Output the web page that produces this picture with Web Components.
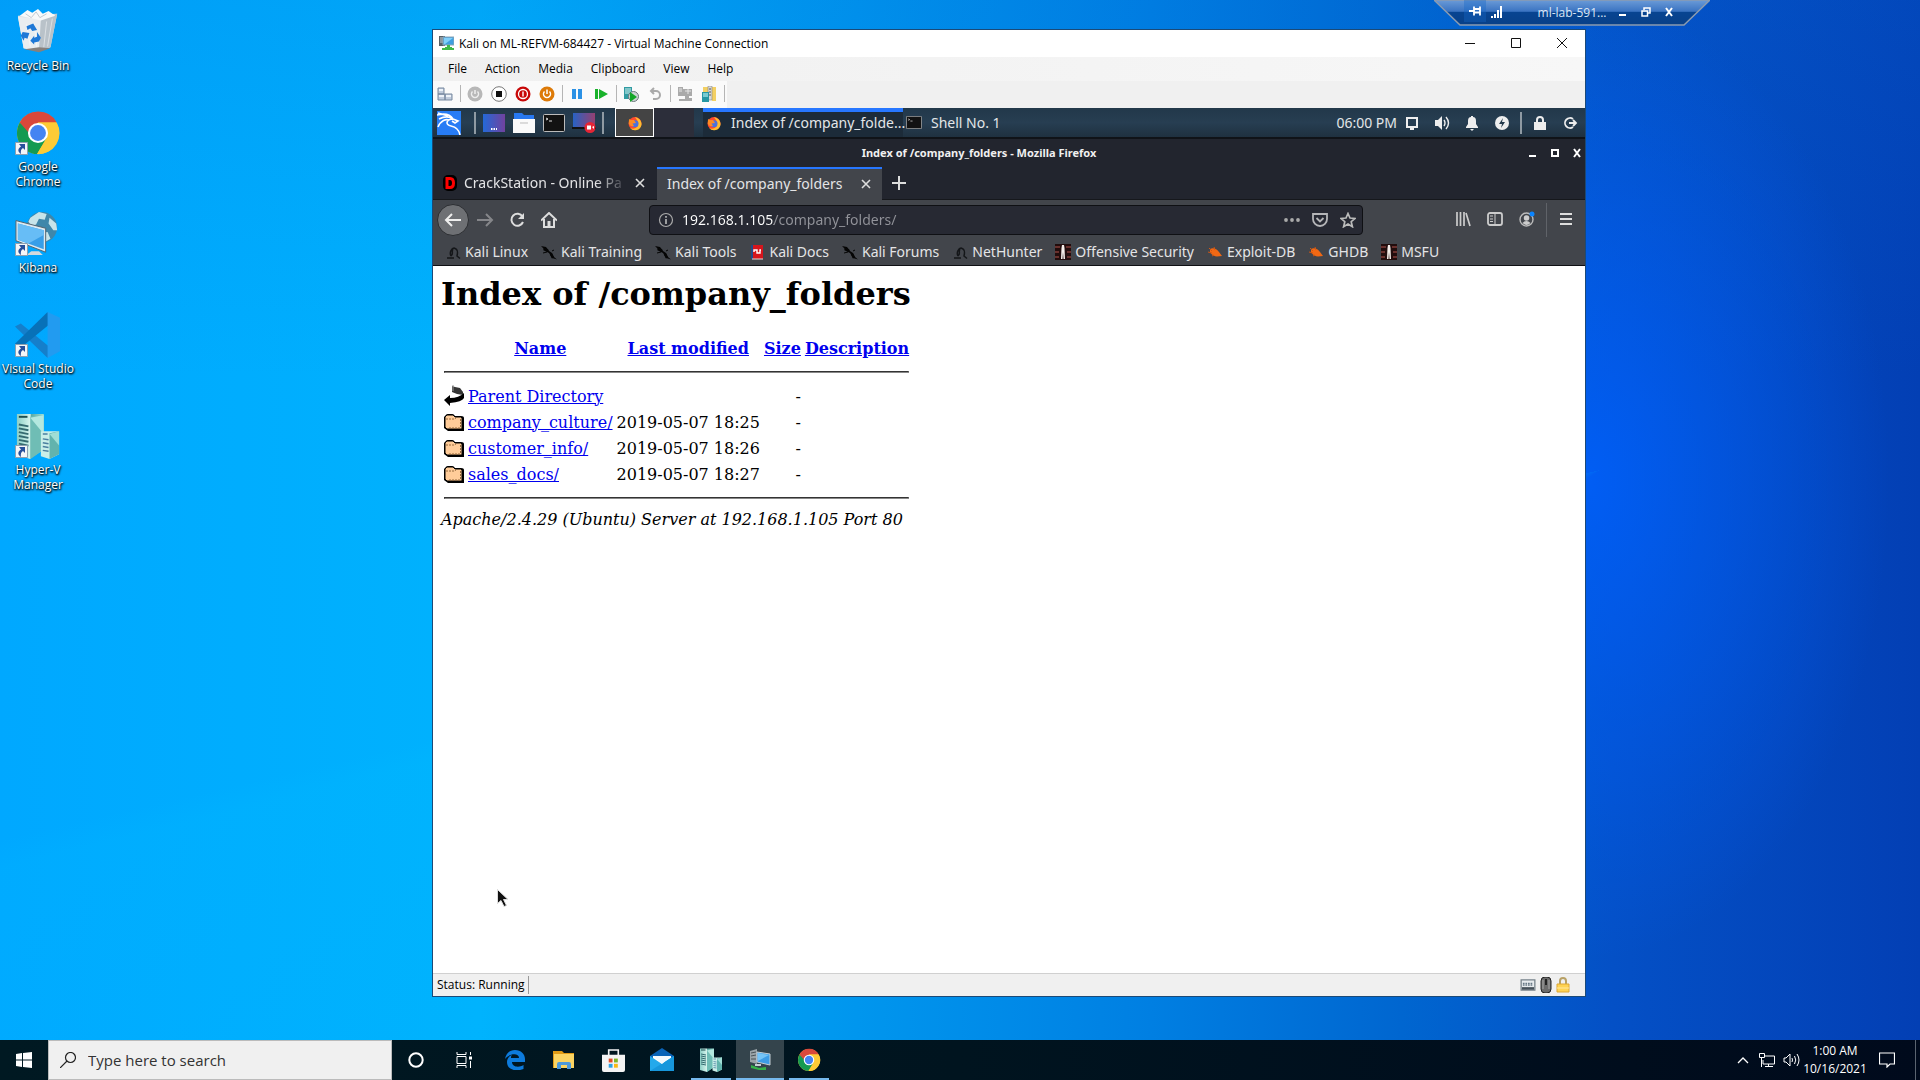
<!DOCTYPE html>
<html lang="en">
<head>
<meta charset="utf-8">
<title>Remote desktop</title>
<style>
html,body{margin:0;height:100%;overflow:hidden}
body{font-family:"Open Sans","Noto Sans",sans-serif;font-size:12px;color:#000}
</style>
</head>
<body>
<lab-desktop></lab-desktop>
<script>
const CHROME = '<circle cx="24" cy="24" r="22" fill="#fbc832"/><path d="M24 13H43.5A22 22 0 0 0 5 13L14.500 29Z" fill="#d9483b"/><path d="M5 13A22 22 0 0 0 23 46L33 29L24 24H14.500Z" fill="#159a51"/><path d="M24 13H43.500A22 22 0 0 1 23 46L33.500 29Z" fill="#fdcb36"/><circle cx="24" cy="24" r="10.500" fill="#fff"/><circle cx="24" cy="24" r="8.300" fill="#4484f2"/>';
const HYPERV = '<defs><linearGradient id="h1" x2="1"><stop offset="0" stop-color="#8ccfc6"/><stop offset=".5" stop-color="#d8f5ee"/><stop offset=".52" stop-color="#58a8a3"/><stop offset="1" stop-color="#9fe0d5"/></linearGradient></defs><path d="M2 1H30V38L16 48L2 44Z" fill="url(#h1)"/><path d="M16 4L30 2V38L16 48Z" fill="#6fbdb5"/><path d="M16 5L30 22V2Z" fill="#b3e8df"/><path d="M4 4h9" stroke="#1d4e50" stroke-width="2"/><path d="M4 12l10 2M4 16l10 2M4 20l10 2M4 24l10 2M4 28l10 2M4 32l10 2" stroke="#356b70" stroke-width="2"/><path d="M27 19H46V43L36 48L27 45Z" fill="#c9eee8"/><path d="M36 21L46 19V43L36 48Z" fill="#62b3ad"/><path d="M36 22L46 34V19Z" fill="#a0ded5"/><path d="M29 22h5M29 27l6 1M29 31l6 1M29 35l6 1M29 39l6 1" stroke="#4b7fa0" stroke-width="1.500"/>';
const FIREFOX = '<circle cx="8" cy="8.500" r="6.500" fill="#ff4a2e"/><path d="M8 2C12 3 15 6 14.500 10A6.600 6.600 0 0 1 3 13C8 15 12 12 11 7C10.500 5 9 4 8 2Z" fill="#ffbd2f"/><circle cx="8" cy="8.800" r="3.500" fill="#4a72dd"/><path d="M2 4C3 5 5 5 7 5L9 8L5.500 8.500L7 11C4 12 2 10 1.800 8Z" fill="#ff8a22"/>';
const MONITOR = '<path d="M1 1h6v10H1z" fill="#555f66"/><path d="M2 3h3M2 5h3M2 7h3" stroke="#c6d1d8"/><path d="M5 2h11v8H5z" fill="#3f9fe0" stroke="#8da6b5"/><path d="M6 3h9L7 9H6z" fill="#7fd0fa"/><path d="M9 10h3v2h2v3h-7v-3h2z" fill="#41b94a"/><path d="M4 14h12" stroke="#41b94a" stroke-width="2"/>';
const DRAGON = '<path d="M0 2L5 3L8 7L11 9L13 13L16 15.500L11 14L8 9L4 7L2 6L3 5Z" fill="#050505"/><path d="M3 4l4 3M10 10l2 4" stroke="#050505" stroke-width="2.500" fill="none"/><path d="M2 9l4-1M11 7l2-1" stroke="#050505"/>';
const HOOK = '<path d="M6 12C4 8 7 4 9 4C13 5 13 8 12 12L15 14.500M2 14H9M8 5C6 8 9 9 6 12" fill="none" stroke="#141619" stroke-width="1.500"/>';
const OFFSEC = '<path d="M0 0h16v16H0z" fill="#220d0d"/><path d="M0 3h5M11 3h5M0 8h4M12 8h4M0 13h4M12 13h4" stroke="#69302d" stroke-width="2"/><path d="M7 1h2l.500 3 .500 11H8.500L8 8l-.500 7H6L6.500 4z" fill="#f5efeb"/>';
const BUG = '<path d="M3 5C6 3 10 5 12 8L15 12L10 12.500C6 12 4 10 3 8Z" fill="#f16814"/><path d="M2 4l3 3M1 8l4 1M5 12l2-1M7 3l1 3" stroke="#d25611"/>';
const TERM = '<rect x=".500" y=".500" width="21" height="17" rx="1" fill="#121212" stroke="#bbb"/><path d="M3 4l2 1-2 1M6 7h3" fill="none" stroke="#ddd"/>';
const ICONS = {
 null:['0 0 1 1',''],
 recycle:['0 0 48 48','<path d="M3 7L44 5L37 40L25 44L9 41Z" fill="#dce2e7"/><path d="M3 8L27 11L25 44L9 41Z" fill="#e9edf0"/><path d="M27 11L44 5L37 40L25 44Z" fill="#b9c2c9"/><path d="M5 7L13 1L18 4L24 0L29 5L35 2L42 7L27 12Z" fill="#f7f9fa"/><path d="M11 5l6 4 5-6 4 6 7-4" fill="none" stroke="#bfc8cf"/><path d="M12 16l4 23M20 15l3 27M33 13l-3 27M39 10l-5 29" stroke="#fff" opacity=".5"/><path d="M10 42l15 3 12-4-12-1z" fill="#86817d"/><path d="M12 18l7-3 4 7-5 1-2-3-3 2zM8 24l7 1-2 6-3-1-1 3-3-5zM23 24l4 6-2 4-5 1v2l-4-4 4-5v2l3-1z" fill="#1e78d6"/>'],
 chrome:['0 0 48 48',CHROME],
 kibana:['0 0 48 48','<circle cx="28" cy="17" r="16" fill="#3f87aa"/><path d="M16 7L25 1L33 3L31 9L25 8L22 14L17 16L14 11ZM36 7L43 13L44 20L40 20L35 13ZM26 23L34 22L37 29L30 33Z" fill="#c7e4ea"/><path d="M1 10L32 18V43L1 31Z" fill="#dceaf2"/><path d="M3 13L30 20V40L3 30Z" fill="#379ee8"/><path d="M3 13L30 20V25L14 34L3 30Z" fill="#67bdf6"/><path d="M12 46h17l-4-4h-8z" fill="#d3d9dd"/><path d="M1 10L32 18V43L1 31Z" fill="none" stroke="#53606a"/>'],
 code:['0 0 48 48','<path d="M0 15L6 12L38 38L34 48Z" fill="#157fcb"/><path d="M0 33L34 0L37 12L5 38Z" fill="#0871b8"/><path d="M34 0L47 6V41L34 48Z" fill="#229bf0"/>'],
 hyperv:['0 0 48 48',HYPERV],
 shortcut:['0 0 13 13','<path d="M.500.500h12v12H.500z" fill="#f4f6f8" stroke="#8da0b0"/><path d="M4 2h6v6L8 6C6 7 5.500 9 6 12C3 10 2 7 6 4.500z" fill="#28509b"/>'],
 monitor:['0 0 16 16',MONITOR],
 tbmonitor:['0 0 22 22','<path d="M1 2l7-2v15l-7-2z" fill="#9aa3a8"/><path d="M2 4l5-1M2 7l5-1M2 10h5" stroke="#4a5357"/><path d="M8 3l13 2v11L8 13z" fill="#3d9de6" stroke="#c4ced4"/><path d="M9 4l11 2-11 6z" fill="#74c4f7"/><path d="M6 15h6v2H6z" fill="#c4ced4"/><path d="M2 16l8 3 7-1v3H10l-8-2z" fill="#35b24a"/>'],
 cad:['0 0 16 16','<path d="M1 2h6v6H1zM1 8h7v6H1zM8 8h7v6H8z" fill="#c0cbdc" stroke="#77889f"/><path d="M2 3h4v2H2zM2 9h5v2H2zM9 9h5v2H9z" fill="#edf2f8"/>'],
 poweroff:['0 0 16 16','<circle cx="8" cy="8" r="7.500" fill="#b8b8b8"/><path d="M8 4v4M5.500 5.500a3.500 3.500 0 1 0 5 0" fill="none" stroke="#eee" stroke-width="1.500"/>'],
 stop:['0 0 16 16','<circle cx="8" cy="8" r="7.300" fill="#fff" stroke="#777"/><path d="M5 5h6v6H5z" fill="#111"/>'],
 shut:['0 0 16 16','<circle cx="8" cy="8" r="7.500" fill="#c80808"/><circle cx="8" cy="8" r="4.500" fill="none" stroke="#fff" stroke-width="1.300"/><path d="M8 5.500v5" stroke="#fff" stroke-width="1.400"/>'],
 save:['0 0 16 16','<circle cx="8" cy="8" r="7.500" fill="#dd7a08"/><path d="M8 3.500v4.500M5.500 5.500a3.500 3.500 0 1 0 5 0" fill="none" stroke="#fff" stroke-width="1.500"/>'],
 pause:['0 0 16 16','<path d="M3 3h4v10H3zM9 3h4v10H9z" fill="#2b91e5"/>'],
 play:['0 0 16 16','<path d="M2 3h3v10H2zM6 3l9 5-9 5z" fill="#19b22b"/>'],
 check:['0 0 16 16','<path d="M1 1h8v12H1z" fill="#319ba2"/><path d="M2 3h6M2 5h6M2 7h6" stroke="#d4f2f0"/><circle cx="10.500" cy="10.500" r="5" fill="#ccd4d5" stroke="#697779"/><path d="M7 6l7 5-7 5z" fill="#13a628"/>'],
 revert:['0 0 16 16','<path d="M4 5h5a4 4 0 0 1 0 8H6M7 2L4 5l3 3" fill="none" stroke="#aaa" stroke-width="2"/>'],
 graymon:['0 0 16 16','<path d="M1 1h5v9H1zM6 3h9v7H6zM8 10h4v2h3v3H2v-2h6z" fill="#aaa"/><path d="M2 3h3M2 5h3M11 3v5M8 5h6" stroke="#e5e5e5"/>'],
 enh:['0 0 16 16','<path d="M2 1h5v14H2zM11 1h4v14h-4z" fill="#f3d064"/><path d="M7 0h4v14H7z" fill="#d9d9d9" stroke="#777" stroke-width=".500"/><path d="M8 3h2M8 6h2M8 9h2" stroke="#555"/><path d="M1 6h7v10H1z" fill="#2597a3"/><path d="M2 8h5M2 10h5" stroke="#cff"/>'],
 kali:['0 0 24 24','<path d="M0 0h24v24H0z" fill="#277cf5"/><path d="M0 4C8 2 13 3 16 8C9 8 8 14 14 15C19 16 22 18 23 24M2 8C8 5 12 5 16 8L21 10L18 12L15 10M1 16C4 9 9 8 12 9M1 2L11 5" fill="none" stroke="#fff" stroke-width="1.600"/>'],
 desk:['0 0 22 18','<defs><linearGradient id="d1" x2="1"><stop stop-color="#2469d8"/><stop offset="1" stop-color="#71429e"/></linearGradient></defs><path d="M0 0h22v18H0z" fill="url(#d1)"/><path d="M8 15h6" stroke="#fff" stroke-width="2" stroke-dasharray="1.500 1"/>'],
 folder:['0 0 22 20','<path d="M1 0h8l2 2h10v5H1z" fill="#2878f0"/><path d="M0 6h22v14H0z" fill="#fafafa"/><path d="M7 10h8" stroke="#bbb"/>'],
 term:['0 0 22 18',TERM],
 rec:['0 0 24 20','<defs><linearGradient id="r1" x2="1"><stop stop-color="#2862c4"/><stop offset="1" stop-color="#954071"/></linearGradient></defs><path d="M1 0h22v14H1z" fill="url(#r1)"/><path d="M0 15h24" stroke="#111" stroke-width="2"/><circle cx="18" cy="14.500" r="5.500" fill="#e62535"/><path d="M15 12.500h4v4h-4zM20 14l2-1v3z" fill="#fff"/>'],
 firefox:['0 0 16 16',FIREFOX],
 screen:['0 0 16 16','<path d="M3 3h10v9H3z" fill="none" stroke="#eee" stroke-width="2"/><path d="M6 14h4" stroke="#eee" stroke-width="2"/>'],
 sound:['0 0 16 16','<path d="M1 5h3l4-4v14L4 11H1z" fill="#eee"/><path d="M10 5q2 3 0 6M12 2q5 6 0 12" fill="none" stroke="#eee" stroke-width="1.400"/>'],
 bell:['0 0 16 16','<path d="M2 12l2-3V6q0-4 3-4V1h2v1q3 0 3 4v3l2 3v1H2zM6 14h4l-2 2z" fill="#eee"/>'],
 bolt:['0 0 16 16','<circle cx="8" cy="8" r="7" fill="#eee"/><path d="M9 3L5 9h3l-1 4 4-6H8z" fill="#24394b"/>'],
 lock:['0 0 16 16','<path d="M2 7h12v8H2z" fill="#eee"/><path d="M5 8V5q0-3 3-3t3 3v3" fill="none" stroke="#eee" stroke-width="2"/>'],
 exit:['0 0 16 16','<path d="M11 4a5 5 0 1 0 0 8M7 8h7M11 5l3 3-3 3" fill="none" stroke="#eee" stroke-width="1.800"/>'],
 min:['0 0 10 10','<path d="M1 8h7" stroke="#fff" stroke-width="2"/>'],
 max:['0 0 10 10','<path d="M2 2h6v6H2z" fill="none" stroke="#fff" stroke-width="2"/>'],
 cls:['0 0 10 10','<path d="M2 1l6 8M8 1L2 9" stroke="#fff" stroke-width="2"/>'],
 wmin:['0 0 10 10','<path d="M0 5.500h10" stroke="#111"/>'],
 wmax:['0 0 10 10','<path d="M.500.500h9v9h-9z" fill="none" stroke="#111"/>'],
 wcls:['0 0 10 10','<path d="M0 0l10 10M10 0L0 10" stroke="#111"/>'],
 dfav:['0 0 16 16','<rect x="1" y="0" width="14" height="16" rx="5" fill="#000"/><path d="M5 3.500h3q3.500 0 3.500 4.500T8 12.500H5z" fill="none" stroke="#f00" stroke-width="3"/>'],
 x:['0 0 12 12','<path d="M2 2l8 8M10 2l-8 8" stroke="#ddd" stroke-width="1.600"/>'],
 plus:['0 0 14 14','<path d="M7 0v14M0 7h14" stroke="#ddd" stroke-width="2"/>'],
 back:['0 0 18 16','<path d="M17 8H2M8 2L2 8l6 6" fill="none" stroke="#eee" stroke-width="2"/>'],
 fwd:['0 0 18 16','<path d="M1 8h15M10 2l6 6-6 6" fill="none" stroke="#85868a" stroke-width="2"/>'],
 reload:['0 0 16 16','<path d="M13.500 4.500A6 6 0 1 0 14 10" fill="none" stroke="#ddd" stroke-width="2"/><path d="M15 1v6H9z" fill="#ddd"/>'],
 home:['0 0 16 16','<path d="M0 8.500L8 1l8 7.500M3 7v8h10V7" fill="none" stroke="#ddd" stroke-width="2"/><path d="M6.500 9h3v5h-3z" fill="#ddd"/>'],
 info:['0 0 16 16','<circle cx="8" cy="8" r="6.500" fill="none" stroke="#aaa" stroke-width="1.200"/><path d="M8 7v5M8 4v1.800" stroke="#bbb" stroke-width="1.600"/>'],
 dots:['0 0 16 16','<circle cx="2" cy="8" r="1.900" fill="#aaa"/><circle cx="8" cy="8" r="1.900" fill="#aaa"/><circle cx="14" cy="8" r="1.900" fill="#aaa"/>'],
 pocket:['0 0 16 16','<path d="M1 2h14v5a7 7 0 0 1-14 0zM4.500 6L8 9.500 11.500 6" fill="none" stroke="#b5b5b8" stroke-width="1.800"/>'],
 star:['0 0 16 16','<path d="M8 1.500l2 4.500 5 .500-3.800 3.200 1.200 5L8 12l-4.400 2.700 1.200-5L1 6.500 6 6z" fill="none" stroke="#bbb" stroke-width="1.700"/>'],
 library:['0 0 16 16','<path d="M2 1v14M5.500 1v14M9 1v14M11 2l4 13" stroke="#ccc" stroke-width="1.700"/>'],
 sidebar:['0 0 16 16','<rect x="1" y="2" width="14" height="12" rx="2" fill="none" stroke="#ccc" stroke-width="1.800"/><path d="M8 2v12M3 5h3M3 8h3M3 10.500h3" stroke="#ccc"/>'],
 account:['0 0 16 16','<circle cx="7.500" cy="8.500" r="6.500" fill="none" stroke="#bbb" stroke-width="1.400"/><circle cx="7.500" cy="7" r="2.800" fill="#ccc"/><path d="M3.500 12q4-4 8 0-4 4-8 0z" fill="#ccc"/><circle cx="13" cy="3" r="2.500" fill="#0a84ff"/>'],
 menu:['0 0 16 16','<path d="M2 3h12M2 8h12M2 13h12" stroke="#ddd" stroke-width="2"/>'],
 dragon:['0 0 16 16',DRAGON], hook:['0 0 16 16',HOOK], offsec:['0 0 16 16',OFFSEC], bug:['0 0 16 16',BUG],
 docs:['0 0 16 16','<path d="M2 1h12v14H2z" fill="#d5151c"/><path d="M2 1h2v14H2z" fill="#234a87"/><path d="M3 15h11" stroke="#ddd"/><path d="M5 8V6h3v3h3V6h1" fill="none" stroke="#fff" stroke-width="1.400"/>'],
 parent:['0 0 20 22','<path d="M8 1l3 1 5 1 3 4v3l-6-1-5-2z" fill="#343434"/><path d="M8 1h2M8 3h2M8 5h2" stroke="#999"/><path d="M20 8v5q-2 4-14 5v3l-6-6 6-5v3q9 0 14-5z" fill="#000"/>'],
 dir:['0 0 20 22','<path d="M1 5q1-2 3-2h4q2 0 3 2h6q3 0 3 2v13H4L0 17V6z" fill="#000"/><path d="M1 6l2-2h6l2 2h6l1 1v11H3l-2-2z" fill="#fc9" stroke="#000"/><path d="M2 8h8l2-1M16 17H4M16.500 8v9" fill="none" stroke="#966a3c" stroke-dasharray="2 1"/>'],
 keyboard:['0 0 18 14','<path d="M1 1h16v12H1z" fill="#e7ebee" stroke="#77828a" stroke-width="1.500"/><path d="M3 5h12M3 7h12" stroke="#667784" stroke-dasharray="2 1" stroke-width="1.500"/><path d="M2 11h14" stroke="#46515a" stroke-width="3"/>'],
 mouse:['0 0 12 16','<rect x="1" y="0" width="10" height="16" rx="4" fill="#6b6b6b" stroke="#222"/><path d="M6 2v6" stroke="#222" stroke-width="2"/><path d="M3 3v9M9 3v9" stroke="#aaa"/>'],
 padlock:['0 0 14 16','<path d="M4 8V4q0-3 3-3t3 3v4" fill="none" stroke="#b8a166" stroke-width="2"/><path d="M1 7h12v8H1z" fill="#ffd352" stroke="#dda735"/><path d="M1 11h12" stroke="#ffe9a0"/>'],
 win:['0 0 16 16','<path d="M0 2l6-1v6.500H0zM7 1l9-1v7.500H7zM0 8.500h6V15l-6-1zM7 8.500h9V16l-9-1z" fill="#fff"/>'],
 search:['0 0 16 16','<circle cx="10.500" cy="5.500" r="5" fill="none" stroke="#222" stroke-width="1.200"/><path d="M7 9l-7 7" stroke="#222" stroke-width="1.200"/>'],
 cortana:['0 0 16 16','<circle cx="8" cy="8" r="6.700" fill="none" stroke="#fff" stroke-width="2"/>'],
 taskview:['0 0 16 16','<path d="M1 4.500h9v7H1zM1 0v2.500h9V0M1 16v-2.500h9V16M14.500 0v3M14.500 9v7" fill="none" stroke="#fff"/><path d="M13 4.500h3v3h-3z" fill="#fff"/>'],
 edge:['0 0 20 20','<path d="M0 9C1 3 5 0 10 0C16 0 20 4 20 9v3H7C7 17 14 18 18.500 15v4C11 22 2 20 2 12C2 9 4 6 7 5C6 6 6 7 6 8H14C14 3 5 3 0 9Z" fill="#0d7bdc"/>'],
 explorer:['0 0 22 18','<path d="M0 0h9l2 2h10v15H0z" fill="#e19b15"/><path d="M1 3h20v14H1z" fill="#fbd462"/><path d="M4 18v-5q0-2 2-2h10q2 0 2 2v5h-4v-4H8v4z" fill="#4d99da"/>'],
 store:['0 0 24 24','<path d="M7 7V1h10v6" fill="none" stroke="#f4f4f4" stroke-width="1.700"/><path d="M0 6h24v16q0 2-2 2H2q-2 0-2-2z" fill="#f4f4f4"/><path d="M7 10h4v4H7z" fill="#e34c27"/><path d="M12.500 10h4v4h-4z" fill="#7fb628"/><path d="M7 15.500h4v4H7z" fill="#2da2e5"/><path d="M12.500 15.500h4v4h-4z" fill="#fab914"/>'],
 mail:['0 0 24 24','<path d="M0 8L12 0l12 8v6H0z" fill="#0963b7"/><path d="M3 8h18v9H3z" fill="#fff"/><path d="M0 8l12 8 12-8v15H0z" fill="#24a9eb"/><path d="M0 23L24 8v15z" fill="#1797dc"/><path d="M3 8h18l-9 8z" fill="#f4f9fd"/>'],
 up:['0 0 12 8','<path d="M1 7l5-5 5 5" fill="none" stroke="#fff" stroke-width="1.300"/>'],
 net:['0 0 16 14','<path d="M6 3h9.500v8H4V7M9.500 11v2M6 13.500h8M.500.500h5v4h-5zM2.500 5v9" fill="none" stroke="#fff"/>'],
 vol:['0 0 17 14','<path d="M1 5h2l4-4v12L3 9H1z" fill="none" stroke="#fff"/><path d="M9 5q1 2 0 4M11.500 3q2.500 4 0 8M14 1q4 6 0 12" fill="none" stroke="#fff"/>'],
 action:['0 0 16 16','<path d="M.500 1h15v11H11l-3 3v-3H.500z" fill="none" stroke="#fff" stroke-width="1.200"/>'],
 pin:['0 0 12 12','<path d="M0 6h5M5 1.500v9M5 4h6M5 7.500h6M11 1.500v9" stroke="#fff" stroke-width="1.800"/>'],
 signal:['0 0 12 12','<path d="M1 12v-2M4 12V8M7 12V4M10 12V0" stroke="#fff" stroke-width="2"/>'],
 restore:['0 0 10 10','<path d="M3 3V1h6v5H7M1 4h5.500v5H1z" fill="none" stroke="#fff" stroke-width="1.500"/>'],
 cursor:['0 0 12 18','<path d="M.500.500v14l3.500-3 3 6 2.500-1-3-6H11z" fill="#111" stroke="#ddd"/>']
};

function define(name, html, setup){
  const t=document.createElement('template');
  t.innerHTML='<style>*{box-sizing:border-box}button{border:0;background:none;padding:0;margin:0;font:inherit;color:inherit;display:flex;align-items:center;justify-content:center}</style>'+html;
  customElements.define(name, class extends HTMLElement{
    constructor(){super();this.attachShadow({mode:'open'}).append(t.content.cloneNode(true));}
    connectedCallback(){ if(setup) setup(this,this.shadowRoot); }
  });
}

customElements.define('ui-icon', class extends HTMLElement{
  static observedAttributes=['name','size'];
  constructor(){super();this.attachShadow({mode:'open'});}
  connectedCallback(){this.draw();}
  attributeChangedCallback(){this.draw();}
  draw(){
    const [box,art]=ICONS[this.getAttribute('name')];
    const [, ,w,h]=box.split(' ');
    const s=this.getAttribute('size');
    this.shadowRoot.innerHTML=`<style>:host{display:block;flex:none}svg{display:block}</style><svg aria-hidden="true" viewBox="${box}" width="${s||w}" height="${s?Math.round(s*h/w):h}">${art}</svg>`;
  }
});

define('desktop-shortcut',`<style>
:host{display:block;width:76px;height:101px;padding-top:9px}
button{flex-direction:column;justify-content:flex-start;gap:3px;width:100%;color:#fff;line-height:15px;font-size:12px;text-shadow:0 1px 2px #000,1px 1px 2px #000}
.art{position:relative}
.arrow{position:absolute;left:0;bottom:1px}
:host([plain]) .arrow{display:none}
</style><button><span class="art"><ui-icon></ui-icon><ui-icon class="arrow" name="shortcut"></ui-icon></span><span><slot></slot></span></button>`,
(el,r)=>{const i=r.querySelector('ui-icon');i.setAttribute('name',el.getAttribute('icon'));i.setAttribute('size',46);});

define('rdp-bar',`<style>
:host{display:block;width:276px;height:26px;color:#fff;font-size:12px}
.in{position:relative;display:flex;align-items:center;height:24px;padding:0 30px}
svg{position:absolute;inset:0}
.in>*:not(svg){position:relative}
.pin{width:22px;height:22px;background:#1468c860;align-self:flex-start}
.sig{margin-left:5px}
.name{flex:1;text-align:center;padding-left:30px;color:#dce6f4}
.b{width:23px}
</style><div class="in"><svg width="276" height="26"><defs><linearGradient id="g" y2="1" x2="0"><stop stop-color="#6b9bd8"/><stop offset=".45" stop-color="#3b74c2"/><stop offset=".5" stop-color="#084491"/><stop offset="1" stop-color="#084088"/></linearGradient></defs><path d="M0 0L26 25H250L276 0Z" fill="url(#g)" stroke="#8b9bb0" stroke-width="1.500"/></svg>
<button class="pin" aria-label="Pin"><ui-icon name="pin"></ui-icon></button><ui-icon class="sig" name="signal"></ui-icon><span class="name">ml-lab-591...</span><button class="b" aria-label="Minimize"><ui-icon name="min"></ui-icon></button><button class="b" aria-label="Restore"><ui-icon name="restore"></ui-icon></button><button class="b" aria-label="Close"><ui-icon name="cls"></ui-icon></button></div>`);

define('vm-toolbar',`<style>
:host{display:flex;height:27px;align-items:center;background:#f0f0f0}
div{display:flex;background:#fafafa;height:100%;align-items:center;padding-bottom:2px}
button{width:24px;height:24px}
i{width:1px;height:17px;background:#b5b5b5;margin:0 2px 0 3px}
</style><div></div>`,(el,r)=>{r.querySelector('div').innerHTML='cad | poweroff stop shut save | pause play | check revert | graymon enh |'.split(' ').map(n=>n==='|'?'<i></i>':`<button aria-label="${n}"><ui-icon name="${n}"></ui-icon></button>`).join('');});

define('kali-panel',`<style>
:host{display:flex;height:31px;align-items:center;background:linear-gradient(#22384a,#273e52 50%,#1f3140);border-bottom:2px solid #101318;color:#e3e6e8;font:14px/20px "Noto Sans",sans-serif;padding-left:3px}
.l,.r{display:flex;align-items:center;height:100%}
.l button{width:30px;height:29px}
.l .k{width:26px}
i{width:2px;height:22px;background:#8f9aa3;flex:none}
.l .cur{width:39px;border:1px solid #fff;background:#444}
.gap{width:40px;height:29px;background:#2c2e3a;margin-right:9px}
.l .task{width:200px;justify-content:flex-start;gap:9px;padding:0 3px}
.on{background:linear-gradient(#2777ff,#2777ff) top/100% 4px no-repeat,#1c2b39}
.task span{white-space:nowrap}
.r{margin-left:auto}.r button{width:30px}
.r i{margin:0 3px}
</style><div class="l"><button class="k" aria-label="Applications"><ui-icon name="kali"></ui-icon></button><i style="margin:0 3px 0 12px"></i><button aria-label="Show desktop"><ui-icon name="desk"></ui-icon></button><button aria-label="Files"><ui-icon name="folder"></ui-icon></button><button aria-label="Terminal"><ui-icon name="term"></ui-icon></button><button aria-label="Recorder"><ui-icon name="rec"></ui-icon></button><i style="margin:0 11px 0 3px"></i><button class="cur" aria-label="Workspace"><ui-icon name="firefox"></ui-icon></button><div class="gap"></div><button class="task on"><ui-icon name="firefox"></ui-icon><span>Index of /company_folde...</span></button><button class="task"><ui-icon name="term" size="16"></ui-icon><span>Shell No. 1</span></button></div>
<div class="r"><span>06:00 PM</span><button aria-label="Display"><ui-icon name="screen"></ui-icon></button><button aria-label="Volume"><ui-icon name="sound"></ui-icon></button><button aria-label="Notifications"><ui-icon name="bell"></ui-icon></button><button aria-label="Power"><ui-icon name="bolt"></ui-icon></button><i></i><button aria-label="Lock"><ui-icon name="lock"></ui-icon></button><button aria-label="Log out"><ui-icon name="exit"></ui-icon></button></div>`);

define('book-mark',`<style>:host{display:block}a{display:flex;align-items:center;gap:4px;color:#e4e4e6;text-decoration:none;white-space:nowrap}</style><a href="#"><ui-icon name="null"></ui-icon><slot></slot></a>`,
(el,r)=>r.querySelector('ui-icon').setAttribute('name',el.getAttribute('icon')));

define('firefox-chrome',`<style>
:host{display:block;color:#e4e4e6;font:14px/20px "Noto Sans",sans-serif}
.title{display:flex;height:28px;align-items:center;gap:6px;background:#22252e;font:bold 11px/15px "Noto Sans",sans-serif;color:#f0f0f0;padding:0 0 1px 6px}
.title span{flex:1;text-align:center}
.title button{width:16px}
.tabs{display:flex;height:33px;background:#22252e;align-items:stretch;border-bottom:1px solid #16181c}
.tab{display:flex;align-items:center;padding:0 10px}
.t1{width:224px;padding:0 11px 0 9px;gap:6px}
.t2{width:225px;background:linear-gradient(#2777ff,#2777ff) top/100% 2px no-repeat,#42454b;margin-bottom:-1px;justify-content:space-between}
.t1 .txt{flex:1;white-space:nowrap;-webkit-mask:linear-gradient(90deg,#000 80%,transparent);mask:linear-gradient(90deg,#000 80%,transparent)}
.plus{width:34px}
.nav{display:flex;align-items:center;height:40px;background:#42454b;padding:0 3px 0 4px}
.nav button{width:32px;height:32px}
.nav .back{background:#6e7074;border:1px solid #2c2e32;border-radius:16px}
.url{display:flex;align-items:center;flex:0 1 714px;height:30px;margin:0 auto;background:#272933;border:1px solid #0f1014;border-radius:4px;padding-left:8px}
input{flex:1;min-width:0;margin-left:8px;border:0;outline:0;padding:0;font:inherit;color:#92939a;-webkit-text-fill-color:transparent;background:linear-gradient(90deg,#fff 92px,#92939a 92px);-webkit-background-clip:text;background-clip:text}
.url button{width:28px}
.sep{width:1px;height:34px;background:#606369;margin:0 3px}
.marks{display:flex;align-items:center;height:26px;gap:13px;padding:0 0 2px 12px;background:#42454b;border-bottom:1px solid #0f1014}
.r{display:flex}
</style>
<div class="title"><span>Index of /company_folders - Mozilla Firefox</span><button aria-label="Minimize"><ui-icon name="min"></ui-icon></button><button aria-label="Maximize"><ui-icon name="max"></ui-icon></button><button aria-label="Close"><ui-icon name="cls"></ui-icon></button></div>
<div class="tabs"><div class="tab t1"><ui-icon name="dfav"></ui-icon><span class="txt">CrackStation - Online Pa</span><button aria-label="Close tab"><ui-icon name="x"></ui-icon></button></div><div class="tab t2"><span>Index of /company_folders</span><button aria-label="Close tab"><ui-icon name="x"></ui-icon></button></div><button class="plus" aria-label="New tab"><ui-icon name="plus"></ui-icon></button></div>
<div class="nav"><button class="back" aria-label="Back"><ui-icon name="back"></ui-icon></button><button aria-label="Forward"><ui-icon name="fwd"></ui-icon></button><button aria-label="Reload"><ui-icon name="reload"></ui-icon></button><button aria-label="Home"><ui-icon name="home"></ui-icon></button>
<div class="url"><ui-icon name="info"></ui-icon><input aria-label="Address" value="192.168.1.105/company_folders/"><button aria-label="Page actions"><ui-icon name="dots"></ui-icon></button><button aria-label="Pocket"><ui-icon name="pocket"></ui-icon></button><button aria-label="Bookmark"><ui-icon name="star"></ui-icon></button></div>
<div class="r"><button aria-label="Library"><ui-icon name="library"></ui-icon></button><button aria-label="Sidebars"><ui-icon name="sidebar"></ui-icon></button><button aria-label="Account"><ui-icon name="account"></ui-icon></button><span class="sep"></span><button aria-label="Menu"><ui-icon name="menu"></ui-icon></button></div></div>
<div class="marks"><book-mark icon="hook">Kali Linux</book-mark><book-mark icon="dragon">Kali Training</book-mark><book-mark icon="dragon">Kali Tools</book-mark><book-mark icon="docs">Kali Docs</book-mark><book-mark icon="dragon">Kali Forums</book-mark><book-mark icon="hook">NetHunter</book-mark><book-mark icon="offsec">Offensive Security</book-mark><book-mark icon="bug">Exploit-DB</book-mark><book-mark icon="bug">GHDB</book-mark><book-mark icon="offsec">MSFU</book-mark></div>`);

define('dir-listing',`<style>
:host{display:block;background:#fff;font:16px/19px "DejaVu Serif",serif;padding:10px 8px}
h1{font-size:32px;line-height:37px;margin:0 0 21px}
a{color:#00e}
table{border-spacing:2px;border-collapse:separate}
td,th{padding:1px}
td:nth-child(3),td:nth-child(4){text-align:right}
hr{margin:8px 0;border:1px inset #888}
.ic{width:20px;height:22px}
address{font-style:italic}
</style><h1>Index of /company_folders</h1><table><thead><tr><th><div class="ic"></div></th><th><a href="#">Name</a></th><th><a href="#">Last modified</a></th><th><a href="#">Size</a></th><th><a href="#">Description</a></th></tr></thead><tbody></tbody></table><address>Apache/2.4.29 (Ubuntu) Server at 192.168.1.105 Port 80</address>`,
(el,r)=>{const rows=[['parent','Parent Directory',''],['dir','company_culture/','2019-05-07 18:25'],['dir','customer_info/','2019-05-07 18:26'],['dir','sales_docs/','2019-05-07 18:27']];
const hr='<tr><th colspan="5"><hr></th></tr>';
r.querySelector('tbody').innerHTML=hr+rows.map(([i,n,d])=>`<tr><td><ui-icon name="${i}"></ui-icon></td><td><a href="#">${n}</a></td><td>${d}</td><td>-</td><td></td></tr>`).join('')+hr;});

define('vm-window',`<style>
:host{display:flex;flex-direction:column;border:1px solid #1b4a78;background:#fff}
.title{display:flex;align-items:center;height:27px;padding:0 0 1px 5px;font-size:12px}
.title span{flex:1;margin-left:5px}
.title button{width:46px;height:26px}
.menu{display:flex;height:24px;align-items:center;background:linear-gradient(90deg,#f0f0f0,#f7f7f7);padding:0 0 2px 15px;gap:18px;font-size:12px}
dir-listing{flex:1}
.status{display:flex;align-items:center;height:23px;background:#f0f0f0;border-top:1px solid #d0d0d0;padding:0 15px 0 4px;gap:4px;font-size:12px}
.status span{margin-right:auto;border-right:1px solid #999;padding-right:3px;line-height:18px}
</style><div class="title"><ui-icon name="monitor"></ui-icon><span>Kali on ML-REFVM-684427 - Virtual Machine Connection</span><button aria-label="Minimize"><ui-icon name="wmin"></ui-icon></button><button aria-label="Maximize"><ui-icon name="wmax"></ui-icon></button><button aria-label="Close"><ui-icon name="wcls"></ui-icon></button></div>
<nav class="menu"><button>File</button><button>Action</button><button>Media</button><button>Clipboard</button><button>View</button><button>Help</button></nav>
<vm-toolbar></vm-toolbar><kali-panel></kali-panel><firefox-chrome></firefox-chrome><dir-listing></dir-listing>
<div class="status"><span>Status: Running</span><ui-icon name="keyboard" size="16"></ui-icon><ui-icon name="mouse"></ui-icon><ui-icon name="padlock"></ui-icon></div>`);

define('task-bar',`<style>
:host{display:flex;height:40px;background:linear-gradient(90deg,#001922,#00141f 50%,#000a1c);color:#fff}
button{width:48px;height:40px}
.search{display:flex;align-items:center;width:344px;background:#f0f0f0;border:1px solid #bbb;padding-left:11px;gap:12px}
input{border:0;background:none;outline:0;flex:1;font:15px/20px "Open Sans",sans-serif;padding:0;color:#333}
input::placeholder{color:#333;opacity:1}
.apps{display:flex;gap:1px;margin-left:3px}
.run{background:linear-gradient(#76b9ed,#76b9ed) center bottom/40px 2px no-repeat}
.act{background:linear-gradient(#76b9ed,#76b9ed) center bottom/100% 2px no-repeat,#34444c}
.tray{display:flex;align-items:center;margin-left:auto}
.tray button{width:24px}
.time{text-align:center;line-height:18px;font-size:12px;width:64px}
.tray .act2{width:40px}
.show{border-left:1px solid #5b6470;height:40px;width:5px;margin-left:8px}
</style><button aria-label="Start"><ui-icon name="win"></ui-icon></button><label class="search"><ui-icon name="search"></ui-icon><input placeholder="Type here to search" aria-label="Search"></label><button aria-label="Cortana"><ui-icon name="cortana"></ui-icon></button><button aria-label="Task view"><ui-icon name="taskview"></ui-icon></button>
<div class="apps"><button aria-label="Edge"><ui-icon name="edge"></ui-icon></button><button aria-label="Explorer"><ui-icon name="explorer"></ui-icon></button><button aria-label="Store"><ui-icon name="store" size="23"></ui-icon></button><button aria-label="Mail"><ui-icon name="mail"></ui-icon></button><button class="run" aria-label="Hyper-V"><ui-icon name="hyperv" size="24"></ui-icon></button><button class="act" aria-label="Virtual machine"><ui-icon name="tbmonitor"></ui-icon></button><button class="run" aria-label="Chrome"><ui-icon name="chrome" size="24"></ui-icon></button></div>
<div class="tray"><button aria-label="Hidden icons"><ui-icon name="up"></ui-icon></button><button aria-label="Network"><ui-icon name="net"></ui-icon></button><button aria-label="Volume"><ui-icon name="vol"></ui-icon></button><div class="time">1:00 AM<br>10/16/2021</div><button class="act2" aria-label="Notifications"><ui-icon name="action"></ui-icon></button><div class="show"></div></div>`);

define('lab-desktop',`<style>
:host{display:flex;flex-direction:column;height:100vh;position:relative;overflow:hidden;
background:conic-gradient(at 1600px 470px,transparent 235deg,rgba(0,200,255,.1) 256deg,transparent 257deg),radial-gradient(ellipse 300px 480px at 1590px 480px,rgba(0,96,255,.8),transparent),linear-gradient(180deg,rgba(0,110,220,.18),transparent 35%),linear-gradient(90deg,#00a8ff 0%,#00b2fd 25%,#009af0 42%,#007fe2 60%,#0066d0 73%,#0450c6 84%,#033fb4 100%)}
.icons{flex:1;display:flex;flex-direction:column}
vm-window{position:absolute;left:432px;right:334px;top:29px;bottom:83px}
rdp-bar{position:absolute;right:210px;top:0}
.cursor{position:absolute;left:497px;top:889px}
</style><div class="icons"><desktop-shortcut icon="recycle" plain>Recycle Bin</desktop-shortcut><desktop-shortcut icon="chrome">Google<br>Chrome</desktop-shortcut><desktop-shortcut icon="kibana">Kibana</desktop-shortcut><desktop-shortcut icon="code">Visual Studio<br>Code</desktop-shortcut><desktop-shortcut icon="hyperv">Hyper-V<br>Manager</desktop-shortcut></div><task-bar></task-bar><vm-window></vm-window><rdp-bar></rdp-bar><ui-icon class="cursor" name="cursor"></ui-icon>`);
</script>
</body>
</html>
